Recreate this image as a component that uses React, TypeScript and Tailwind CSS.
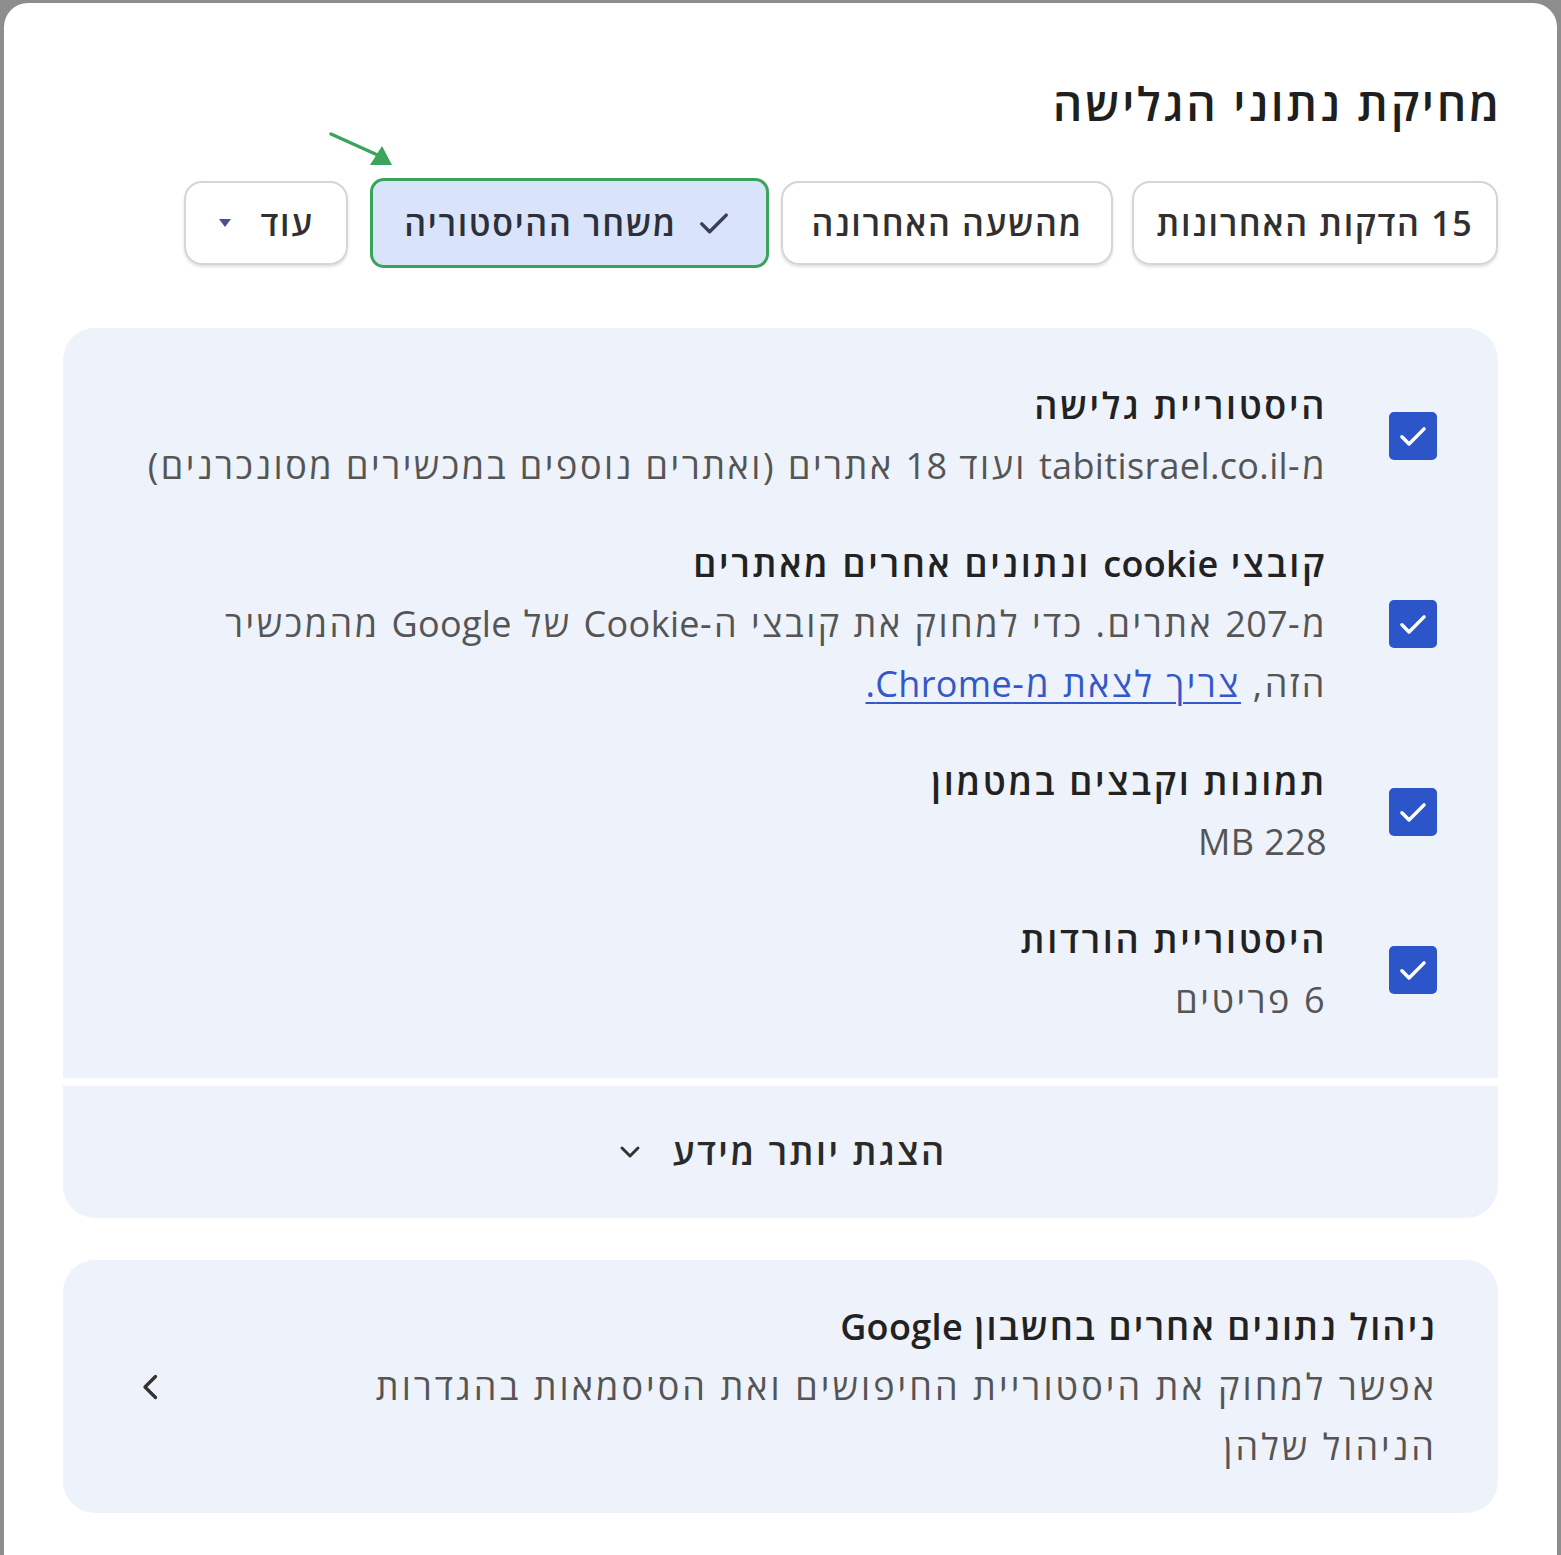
import React from 'react';

const font = { fontFamily: '"Open Sans", "Noto Sans", "DejaVu Sans", sans-serif' };

function Check({ className = '', width = 2.6 }: { className?: string; width?: number }) {
  return (
    <svg className={className} viewBox="0 0 24 24" fill="none" stroke="currentColor" strokeWidth={width} strokeLinecap="round" strokeLinejoin="round">
      <path d="M5 12.5l4.5 4.5L19 7.5" />
    </svg>
  );
}

function Checkbox() {
  return (
    <div className="w-[48px] h-[48px] rounded-[5px] bg-[#2b55c9] flex items-center justify-center shrink-0 text-white">
      <Check className="w-[38px] h-[38px]" width={2.2} />
    </div>
  );
}

// Latin runs are already the right width, so they keep a tighter spacing
function L({ children }: { children: React.ReactNode }) {
  return <span className="tracking-[0.01em]">{children}</span>;
}

interface Item {
  title: React.ReactNode;
  body: React.ReactNode;
}

const items: Item[] = [
  {
    title: 'היסטוריית גלישה',
    body: (
      <>
        מ-<L>tabitisrael.co.il</L> ועוד <L>18</L> אתרים (ואתרים נוספים במכשירים מסונכרנים)
      </>
    ),
  },
  {
    title: (
      <>
        קובצי <L>cookie</L> ונתונים אחרים מאתרים
      </>
    ),
    body: (
      <>
        מ-<L>207</L> אתרים. כדי למחוק את קובצי ה-<L>Cookie</L> של <L>Google</L> מהמכשיר
        <br />
        הזה,{' '}
        <a className="text-[#3458c9] underline underline-offset-[5px] decoration-[2px]">
          צריך לצאת מ-<L>Chrome.</L>
        </a>
      </>
    ),
  },
  { title: 'תמונות וקבצים במטמון', body: <L>228 MB</L> },
  { title: 'היסטוריית הורדות', body: '6 פריטים' },
];

const chip =
  'h-[84px] rounded-[18px] border-2 border-[#d3d5d8] shadow-[0_2px_3px_rgba(0,0,0,0.12)] flex items-center justify-center text-[34px] font-semibold tracking-[0.05em] text-[#303030]';

export default function App() {
  return (
    <div dir="rtl" style={font} className="min-h-screen bg-[#8d8d8d] pt-[3px] px-[4px]">
      <div className="relative bg-white rounded-t-[24px] h-[1552px] px-[59px]">
        <h1 className="pt-[72px] h-[176px] -mr-[4px] text-[46px] leading-[56px] font-semibold tracking-[0.06em] text-[#1f1f1f]">
          מחיקת נתוני הגלישה
        </h1>

        <div className="flex items-center h-[88px]">
          <div className={`${chip} w-[366px] ml-[19px]`}>15 הדקות האחרונות</div>
          <div className={`${chip} w-[332px] ml-[12px]`}>מהשעה האחרונה</div>
          <div className="w-[399px] h-[90px] ml-[22px] rounded-[14px] border-[3px] border-[#3aa55a] bg-[#d9e4fb] flex items-center justify-center gap-[16px] text-[34px] font-semibold tracking-[0.05em] text-[#2d2f3a]">
            <Check className="w-[42px] h-[42px] text-[#3a3f55]" width={2} />
            <span>משחר ההיסטוריה</span>
          </div>
          <div className={`${chip} w-[164px] gap-[28px]`}>
            <span>עוד</span>
            <svg className="w-[14px] h-[10px]" viewBox="0 0 14 10">
              <path d="M1 1h12L7 9z" fill="#4b4f8a" />
            </svg>
          </div>
        </div>

        <svg className="absolute left-[322px] top-[126px] w-[72px] h-[42px]" viewBox="0 0 72 42">
          <path d="M5 5 L56 28" stroke="#3aa55a" strokeWidth={3.5} strokeLinecap="round" />
          <path d="M44 36 L66 36 L56 17 Z" fill="#3aa55a" />
        </svg>

        <div className="mt-[61px] bg-[#eef2fa] rounded-t-[32px] px-[61px] pt-[48px] pb-[48px] flex flex-col gap-[38px]">
          {items.map((it, i) => (
            <div key={i} className="flex items-center gap-[62px]">
              <Checkbox />
              <div className="flex-1 text-[36px] leading-[60px] tracking-[0.07em]">
                <div className="font-semibold text-[#222222] tracking-[0.075em]">{it.title}</div>
                <div className="text-[#555555]">{it.body}</div>
              </div>
            </div>
          ))}
        </div>

        <div className="mt-[8px] h-[132px] bg-[#eef2fa] rounded-b-[32px] flex items-center justify-center gap-[26px] text-[36px] font-semibold tracking-[0.07em] text-[#2a2a2a]">
          <span>הצגת יותר מידע</span>
          <svg className="w-[32px] h-[32px] text-[#333]" viewBox="0 0 24 24" fill="none" stroke="currentColor" strokeWidth={2.2} strokeLinecap="round" strokeLinejoin="round">
            <path d="M6 9l6 6 6-6" />
          </svg>
        </div>

        <div className="mt-[42px] h-[253px] bg-[#eef2fa] rounded-[32px] pr-[61px] pl-[70px] flex items-center justify-between">
          <div className="w-[1110px] text-[36px] leading-[60px] tracking-[0.085em]">
            <div className="font-semibold text-[#222222] tracking-[0.06em]">
              ניהול נתונים אחרים בחשבון <L>Google</L>
            </div>
            <div className="text-[#555555]">אפשר למחוק את היסטוריית החיפושים ואת הסיסמאות בהגדרות הניהול שלהן</div>
          </div>
          <svg className="w-[36px] h-[36px] text-[#333]" viewBox="0 0 24 24" fill="none" stroke="currentColor" strokeWidth={2.2} strokeLinecap="round" strokeLinejoin="round">
            <path d="M15 5l-7 7 7 7" />
          </svg>
        </div>
      </div>
    </div>
  );
}
